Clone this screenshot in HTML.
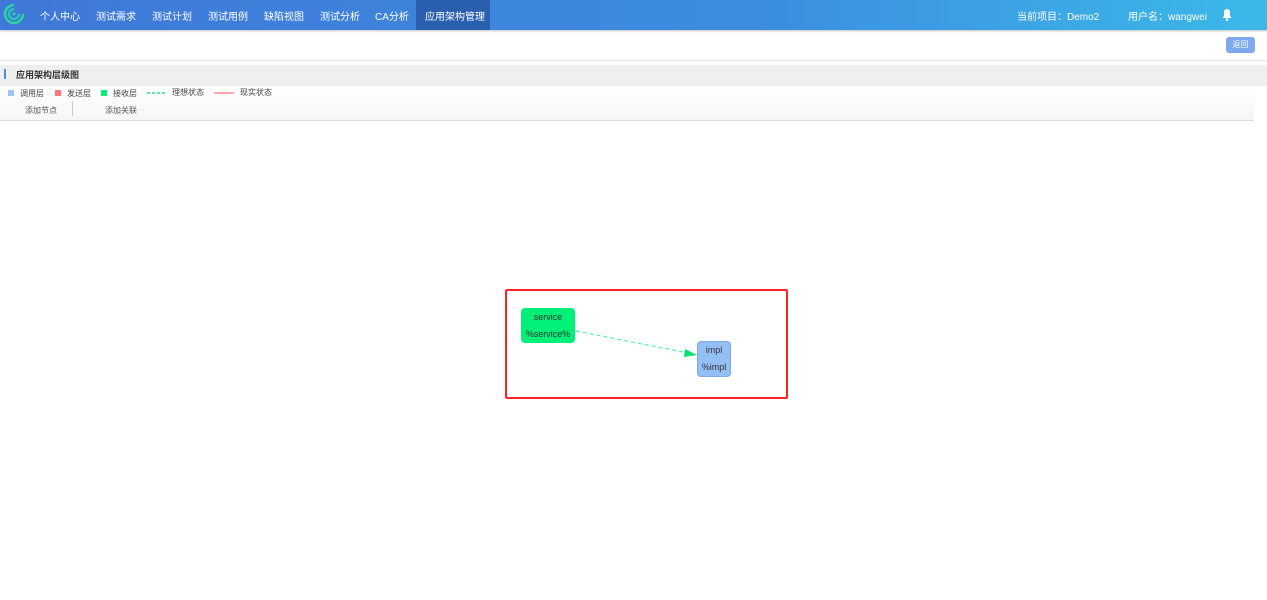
<!DOCTYPE html>
<html><head><meta charset="utf-8"><style>
*{margin:0;padding:0;box-sizing:border-box}
body{width:1267px;height:600px;overflow:hidden;background:#fff;font-family:"Liberation Sans","Noto Sans CJK SC",sans-serif;position:relative}
.nav{position:absolute;left:0;top:0;width:1267px;height:30px;background:linear-gradient(90deg,#3f78d8 0%,#3c8de0 60%,#3bb9e8 100%);box-shadow:0 1px 2px rgba(0,0,0,.25)}
.nav span{position:absolute;top:8px;font-size:10px;color:#fff}
.act{position:absolute;left:416px;top:0;width:74px;height:30px;background:#2a5fb0}
.abs{position:absolute}
</style></head><body>
<div class="nav">
<svg class="abs" style="left:3px;top:3px" width="22" height="22" viewBox="0 0 22 22"><path d="M11 2a9 9 0 1 0 9 9" fill="none" stroke="#2ad6a0" stroke-width="2.5"/><path d="M11 6a5 5 0 1 0 5 5" fill="none" stroke="#25c9b0" stroke-width="2.2"/><circle cx="11" cy="11" r="1.5" fill="#2ad6a0"/></svg>
<div class="act"></div>
<span style="left:40px">个人中心</span>
<span style="left:96px">测试需求</span>
<span style="left:152px">测试计划</span>
<span style="left:208px">测试用例</span>
<span style="left:264px">缺陷视图</span>
<span style="left:320px">测试分析</span>
<span style="left:375px">CA分析</span>
<span style="left:425px">应用架构管理</span>
<span style="left:1017px">当前项目：Demo2</span>
<span style="left:1128px">用户名：wangwei</span>
<svg class="abs" style="left:1221px;top:8px" width="12" height="13" viewBox="0 0 12 13"><path d="M6 1C3.5 1 3 3 3 5v3L1.5 10h9L9 8V5C9 3 8.5 1 6 1z" fill="#fff"/><circle cx="6" cy="11.5" r="1.3" fill="#fff"/></svg>
</div>
<div class="abs" style="left:1226px;top:37px;width:29px;height:16px;background:#7fa9ec;border-radius:3px;color:#fff;font-size:8px;text-align:center;line-height:16px">返回</div>
<div class="abs" style="left:0;top:60px;width:1267px;height:1px;background:#e4e4e4"></div>
<div class="abs" style="left:0;top:65px;width:1267px;height:21px;background:#efefef"></div>
<div class="abs" style="left:4px;top:69px;width:2px;height:10px;background:#4a90e2"></div>
<div class="abs" style="left:16px;top:69px;font-size:9px;line-height:12px;font-weight:bold;color:#333">应用架构层级图</div>
<div class="abs" style="left:0;top:86px;width:1254px;height:35px;background:linear-gradient(#fff,#f6f6f6);border-bottom:1px solid #ddd"></div>
<div class="abs" style="left:8px;top:90px;width:6px;height:6px;background:#9ec3f5"></div>
<div class="abs" style="left:20px;top:88px;font-size:8px;color:#444">调用层</div>
<div class="abs" style="left:55px;top:90px;width:6px;height:6px;background:#f77"></div>
<div class="abs" style="left:67px;top:88px;font-size:8px;color:#444">发送层</div>
<div class="abs" style="left:101px;top:90px;width:6px;height:6px;background:#00f070"></div>
<div class="abs" style="left:113px;top:88px;font-size:8px;color:#444">接收层</div>
<svg class="abs" style="left:147px;top:92px" width="90" height="3"><line x1="0" y1="1" x2="20" y2="1" stroke="#00e070" stroke-width="1.2" stroke-dasharray="3,2"/><line x1="67" y1="1" x2="87" y2="1" stroke="#f77" stroke-width="1.2"/></svg>
<div class="abs" style="left:172px;top:87px;font-size:8px;color:#444">理想状态</div>
<div class="abs" style="left:240px;top:87px;font-size:8px;color:#444">现实状态</div>
<div class="abs" style="left:25px;top:105px;font-size:8px;color:#555">添加节点</div>
<div class="abs" style="left:72px;top:101px;width:1px;height:15px;background:#ccc"></div>
<div class="abs" style="left:105px;top:105px;font-size:8px;color:#555">添加关联</div>
<div class="abs" style="left:505px;top:289px;width:283px;height:110px;border:2px solid #f22;border-radius:2px"></div>
<div class="abs" style="left:521px;top:308px;width:54px;height:35px;background:#00f078;border-radius:4px;font-size:9px;color:#333;text-align:center;line-height:17px;padding-top:1px">service<br>%service%</div>
<div class="abs" style="left:697px;top:341px;width:34px;height:36px;background:#94bff5;border:1px solid #7fa9e4;border-radius:4px;font-size:9px;color:#333;text-align:center;line-height:17px">impl<br>%impl</div>
<svg class="abs" style="left:0;top:0" width="1267" height="600"><line x1="576" y1="331" x2="688" y2="353" stroke="#3cf090" stroke-width="1" stroke-dasharray="4,3"/><path d="M697 355 L685 349 L684 357 Z" fill="#00e070"/></svg>
</body></html>
